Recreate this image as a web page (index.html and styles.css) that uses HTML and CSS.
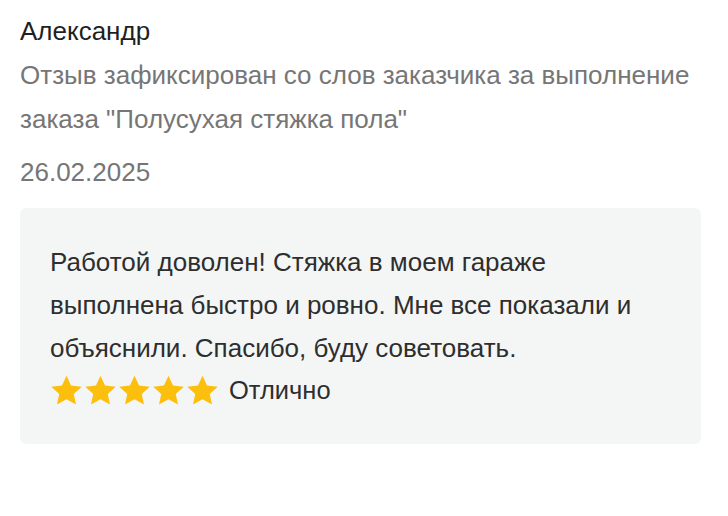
FILE: index.html
```html
<!DOCTYPE html>
<html lang="ru">
<head>
<meta charset="utf-8">
<link rel="stylesheet" href="styles.css">
</head>
<body>
<div class="review">
  <div class="author">Александр</div>
  <div class="note">Отзыв зафиксирован со слов заказчика за выполнение заказа "Полусухая стяжка пола"</div>
  <div class="date">26.02.2025</div>
  <div class="card">
    <p class="text">Работой доволен! Стяжка в моем гараже выполнена быстро и ровно. Мне все показали и объяснили. Спасибо, буду советовать.</p>
    <div class="rating">
      <div class="stars">
        <svg class="star" viewBox="0 0 24 24"><path d="M12 1.2l3.3 7.1 7.8.9-5.8 5.3 1.6 7.7L12 18.3l-6.9 3.9 1.6-7.7L.9 9.2l7.8-.9z"/></svg>
        <svg class="star" viewBox="0 0 24 24"><path d="M12 1.2l3.3 7.1 7.8.9-5.8 5.3 1.6 7.7L12 18.3l-6.9 3.9 1.6-7.7L.9 9.2l7.8-.9z"/></svg>
        <svg class="star" viewBox="0 0 24 24"><path d="M12 1.2l3.3 7.1 7.8.9-5.8 5.3 1.6 7.7L12 18.3l-6.9 3.9 1.6-7.7L.9 9.2l7.8-.9z"/></svg>
        <svg class="star" viewBox="0 0 24 24"><path d="M12 1.2l3.3 7.1 7.8.9-5.8 5.3 1.6 7.7L12 18.3l-6.9 3.9 1.6-7.7L.9 9.2l7.8-.9z"/></svg>
        <svg class="star" viewBox="0 0 24 24"><path d="M12 1.2l3.3 7.1 7.8.9-5.8 5.3 1.6 7.7L12 18.3l-6.9 3.9 1.6-7.7L.9 9.2l7.8-.9z"/></svg>
      </div>
      <span class="label">Отлично</span>
    </div>
  </div>
</div>
</body>
</html>
```

FILE: styles.css
```css
html, body {
  margin: 0;
  padding: 0;
  background: #ffffff;
}
body {
  font-family: "Liberation Sans", Arial, sans-serif;
  font-size: 26px;
}
.review {
  padding: 15px 20px 0 20px;
}
.author {
  color: #1f1f1f;
  line-height: 32px;
}
.note {
  color: #767676;
  line-height: 44px;
  margin-top: 6px;
}
.date {
  color: #767676;
  line-height: 44px;
  margin-top: 9px;
}
.card {
  margin-top: 14px;
  background: #f4f6f5;
  border-radius: 6px;
  padding: 33px 30px 34px 30px;
  width: 621px;
}
.text {
  margin: 0;
  color: #2e2e2e;
  line-height: 43px;
  max-width: 605px;
}
.rating {
  display: flex;
  align-items: center;
  gap: 10px;
  height: 40px;
}
.stars {
  display: flex;
  gap: 1px;
}
.star {
  width: 33px;
  height: 33px;
  fill: #fcbf0e;
}
.label {
  color: #2e2e2e;
  font-size: 25.5px;
}
```
